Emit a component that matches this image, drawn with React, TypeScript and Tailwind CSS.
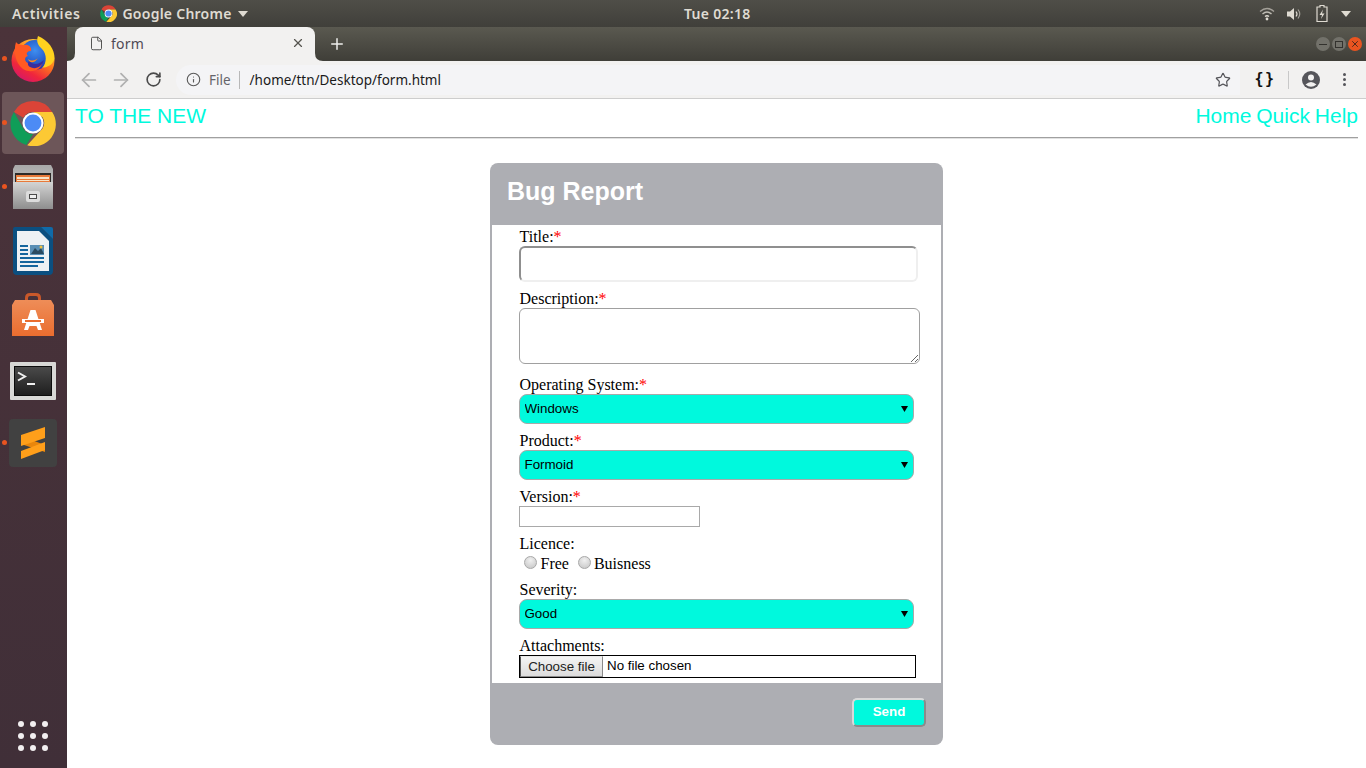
import React from "react";
import { ArrowLeft, ArrowRight, RotateCw, Info, Star, File, X, Plus } from "lucide-react";

function Firefox() {
  return (
    <svg width="46" height="46" viewBox="0 0 46 46">
      <defs>
        <linearGradient id="ffa" x1="0.75" y1="0.05" x2="0.2" y2="0.95">
          <stop offset="0" stopColor="#ffd83a" />
          <stop offset="0.4" stopColor="#ff7a1c" />
          <stop offset="0.75" stopColor="#f0263c" />
          <stop offset="1" stopColor="#d5176a" />
        </linearGradient>
        <radialGradient id="ffb" cx="0.5" cy="0.35" r="0.65">
          <stop offset="0" stopColor="#3f8ff0" />
          <stop offset="0.7" stopColor="#2458c8" />
          <stop offset="1" stopColor="#3a2e9c" />
        </radialGradient>
      </defs>
      <circle cx="23" cy="24.5" r="21.5" fill="url(#ffa)" />
      <circle cx="25" cy="19" r="15" fill="url(#ffb)" />
      <path d="M28 0 C26 6 28 9 32 13 C37 18 37 27 32 32 C37 31 42 30 44.5 23 C45 13 38 4 28 0Z" fill="#ffd21f" />
      <path d="M6 6 C8 9 12 9 14 9 C18 8 22 11 21 15 C18 15 15 17 18 20 C14 21 14 25 19 28 C24 31 29 29 32 27 C31 34 21 38 13 33 C6 28 3 16 6 6Z" fill="#ff5a22" />
      <path d="M19 25 C24 30 30 28 34 24 C32 31 25 34 20 31 C18 30 17 27 19 25Z" fill="#3a2e9c" />
      <path d="M18 23 C22 26 26 24 28 22 C25 27 20 28 18 23Z" fill="#ff8a1c" />
    </svg>
  );
}

function Chrome({ size }: { size: number }) {
  return (
    <svg width={size} height={size} viewBox="0 0 48 48">
      <path d="M24 1 A23 23 0 0 1 44 12.5 L24 12.5 A11.5 11.5 0 0 0 13.9 18.5 L4.1 12.5 A23 23 0 0 1 24 1Z" fill="#db4437" />
      <path d="M4.1 12.5 L14 29.7 A11.5 11.5 0 0 0 24 35.5 L17 47 A23 23 0 0 1 4.1 12.5Z" fill="#0f9d58" />
      <path d="M44 12.5 A23 23 0 0 1 18 47.2 L34 29.7 A11.5 11.5 0 0 0 34 18 L24 12.5Z" fill="#fcc934" />
      <circle cx="24" cy="24" r="11" fill="#fff" />
      <circle cx="24" cy="24" r="8.8" fill="#4c8bf5" />
    </svg>
  );
}

function Cabinet() {
  return (
    <svg width="42" height="44" viewBox="0 0 42 44">
      <defs>
        <linearGradient id="cab" x1="0" y1="0" x2="0" y2="1">
          <stop offset="0" stopColor="#d4d4d4" />
          <stop offset="1" stopColor="#8e8e8e" />
        </linearGradient>
        <linearGradient id="lid" x1="0" y1="0" x2="0" y2="1">
          <stop offset="0" stopColor="#a8a8a8" />
          <stop offset="1" stopColor="#e4e4e4" />
        </linearGradient>
      </defs>
      <path d="M3 0 H39 L41 4 V44 H1 V4Z" fill="url(#lid)" />
      <rect x="3" y="8" width="36" height="10" fill="#2e2a28" />
      <rect x="4" y="10" width="34" height="7" fill="#e8793a" />
      <rect x="5" y="12" width="32" height="2" fill="#f6e3c8" />
      <rect x="5" y="15" width="32" height="1" fill="#f6e3c8" />
      <rect x="1" y="17" width="40" height="27" fill="url(#cab)" />
      <rect x="14" y="26" width="14" height="11" rx="2" fill="#dcdcdc" />
      <rect x="17" y="29" width="8" height="5" fill="#4a4a4a" />
      <rect x="18" y="30" width="6" height="3" fill="#eee" />
    </svg>
  );
}

function Writer() {
  return (
    <svg width="42" height="50" viewBox="0 0 42 50">
      <path d="M3 1 H29 L41 13 V45 Q41 49 37 49 H5 Q1 49 1 45 V3 Q1 1 3 1Z" fill="#0b4f80" />
      <path d="M29 1 H39 Q41 1 41 3 V13Z" fill="#0f6aa8" />
      <path d="M5 5 H27 L37 15 V45 H5Z" fill="#eef1f4" />
      <rect x="8" y="19" width="8" height="2" fill="#15659d" />
      <rect x="8" y="23" width="8" height="2" fill="#15659d" />
      <rect x="8" y="27" width="8" height="2" fill="#15659d" />
      <rect x="18" y="19" width="14" height="10" fill="#5a8fb5" />
      <path d="M19 28 L23 22 L26 25 L29 22 L32 28Z" fill="#2a4a60" />
      <circle cx="29" cy="21" r="1.5" fill="#f0c040" />
      <rect x="8" y="31" width="24" height="2" fill="#15659d" />
      <rect x="8" y="35" width="24" height="2" fill="#15659d" />
      <rect x="8" y="39" width="18" height="2" fill="#15659d" />
    </svg>
  );
}

function Bag() {
  return (
    <svg width="44" height="44" viewBox="0 0 44 44">
      <defs>
        <linearGradient id="bag" x1="0" y1="0" x2="0" y2="1">
          <stop offset="0" stopColor="#ee8d58" />
          <stop offset="1" stopColor="#ea6d2f" />
        </linearGradient>
      </defs>
      <path d="M15.5 14 V5 Q15.5 1.5 19 1.5 H25 Q28.5 1.5 28.5 5 V14" fill="none" stroke="#c9582a" strokeWidth="3" />
      <path d="M4 7 H40 L43 12 V43 H1 V12Z" fill="url(#bag)" />
      <path d="M19.5 17 H24.5 L31 37 H27 L25.5 33 H18.5 L17 37 H13Z" fill="#fff" />
      <rect x="11" y="26" width="22" height="4" fill="#fff" />
      <rect x="14" y="27" width="16" height="2" fill="#ea6d2f" />
    </svg>
  );
}

function Terminal() {
  return (
    <svg width="46" height="38" viewBox="0 0 46 38">
      <defs>
        <linearGradient id="term" x1="0" y1="0" x2="0" y2="1">
          <stop offset="0" stopColor="#4a4a4a" />
          <stop offset="1" stopColor="#1e1e1e" />
        </linearGradient>
      </defs>
      <rect width="46" height="38" rx="1" fill="#d8d8d6" />
      <rect x="4" y="4" width="38" height="30" fill="#0c0c0c" />
      <rect x="5" y="5" width="36" height="28" fill="url(#term)" />
      <path d="M8 10.5 L15 14.5 L8 18.5" fill="none" stroke="#f0f0f0" strokeWidth="2" />
      <rect x="17" y="21" width="8" height="2" fill="#f0f0f0" />
    </svg>
  );
}

function Sublime() {
  return (
    <svg width="48" height="48" viewBox="0 0 48 48">
      <rect width="48" height="48" rx="4" fill="#414141" />
      <path d="M12 17 L36 26 V33 L12 25Z" fill="#e8860c" />
      <path d="M36 8 V19 L12 27 V16Z" fill="#ff9f1a" />
      <path d="M36 23 V31 L12 40 V32Z" fill="#ff9f1a" />
    </svg>
  );
}

function DockItem({ dot, active, children }: { dot?: boolean; active?: boolean; children: React.ReactNode }) {
  return (
    <div className="relative flex h-[64px] items-center justify-center pr-[1px]">
      {active && <div className="absolute bottom-[1px] left-[2px] right-[3px] top-[1px] rounded-[4px] bg-[#6d5659]" />}
      {dot && <div className="absolute left-[2px] top-[29px] h-[5px] w-[5px] rounded-full bg-[#e95420]" />}
      <div className="relative flex">{children}</div>
    </div>
  );
}

function Label({ text, req }: { text: string; req?: boolean }) {
  return (
    <div className="h-[18px] pl-[0.5px] text-[16px] leading-[18px] text-black">
      {text}
      {req && <span className="text-[#ff0000]">*</span>}
    </div>
  );
}

function Sel({ value }: { value: string }) {
  return (
    <div className="relative h-[30px] w-[395px]">
      <select
        defaultValue={value}
        className="block h-[30px] w-full appearance-none rounded-[8px] border border-[#a9a9a9] bg-[#00f9dd] pl-[4.5px] font-['Liberation_Sans'] text-[13.33px] text-black"
      >
        <option>{value}</option>
      </select>
      <svg className="pointer-events-none absolute right-[6px] top-[12px]" width="7" height="6" viewBox="0 0 7 6">
        <path d="M0 0 H7 L3.5 6Z" fill="#000" />
      </svg>
    </div>
  );
}

function Radio() {
  return (
    <span className="inline-block h-[13px] w-[13px] rounded-full border border-[#a8a8a8] bg-[radial-gradient(circle_at_50%_30%,#f0f0f0,#c4c4c4)]" />
  );
}

export default function App() {
  return (
    <div className="flex h-[768px] w-[1366px] flex-col overflow-hidden bg-white font-['Liberation_Sans',sans-serif]">
      <header className="relative flex h-[27px] shrink-0 items-center justify-between bg-[linear-gradient(#4f4e48,#403f3a)] pl-[12px] pr-[15px] font-['Noto_Sans',sans-serif] text-[14px] text-[#dfdbd2]">
        <div className="flex items-center">
          <span className="font-semibold tracking-[0.6px]">Activities</span>
          <span className="ml-[20px] mr-[5px] flex"><Chrome size={17} /></span>
          <span className="font-semibold tracking-[0.25px]">Google Chrome</span>
          <svg className="ml-[6px]" width="10" height="6" viewBox="0 0 10 6"><path d="M0 0 H10 L5 6Z" fill="#dfdbd2" /></svg>
        </div>
        <span className="absolute left-[684px] top-[3px] font-semibold tracking-[0.3px]">Tue 02:18</span>
        <div className="flex items-center gap-[11px]">
          <svg width="16" height="14" viewBox="0 0 16 14" fill="none" stroke="#dfdbd2" strokeWidth="1.4">
            <path d="M1 4.5 Q8 -1.5 15 4.5" opacity="0.6" />
            <path d="M3.5 7 Q8 3 12.5 7" opacity="0.8" />
            <path d="M6 9.5 Q8 8 10 9.5" />
            <circle cx="8" cy="12" r="1.4" fill="#dfdbd2" stroke="none" />
          </svg>
          <svg width="16" height="14" viewBox="0 0 16 14" fill="none" stroke="#dfdbd2" strokeWidth="1.2">
            <path d="M1 4.5 H4 L8 1 V13 L4 9.5 H1Z" fill="#dfdbd2" stroke="none" />
            <path d="M10 4.5 Q12 7 10 9.5" />
            <path d="M12 2.5 Q15.5 7 12 11.5" opacity="0.6" />
          </svg>
          <svg className="ml-[3px]" width="12" height="17" viewBox="0 0 12 17">
            <path d="M4 0.5 H8 V2 H11 V16.5 H1 V2 H4Z" fill="none" stroke="#dfdbd2" strokeWidth="1.2" />
            <path d="M7 4.5 L3.5 10 H6 L5 14 L8.5 8.5 H6Z" fill="#dfdbd2" />
          </svg>
          <svg className="ml-[2px]" width="10" height="6" viewBox="0 0 10 6"><path d="M0 0 H10 L5 6Z" fill="#dfdbd2" /></svg>
        </div>
      </header>

      <div className="flex min-h-0 flex-1">
        <aside className="flex w-[67px] shrink-0 flex-col justify-between bg-[linear-gradient(#4b333a,#402f38)]">
          <div>
            <DockItem dot><Firefox /></DockItem>
            <DockItem dot active><Chrome size={46} /></DockItem>
            <DockItem dot><Cabinet /></DockItem>
            <DockItem><Writer /></DockItem>
            <DockItem><Bag /></DockItem>
            <div className="pt-[2px]"><DockItem><Terminal /></DockItem></div>
            <div className="-mt-[2px]"><DockItem dot><Sublime /></DockItem></div>
          </div>
          <div className="mb-[17px] mr-[1px] grid w-[30px] grid-cols-3 gap-[6px] self-center">
            {Array.from({ length: 9 }).map((_, i) => (
              <span key={i} className="h-[6px] w-[6px] rounded-full bg-[#f2eff0]" />
            ))}
          </div>
        </aside>

        <div className="flex min-w-0 flex-1 flex-col">
          <div className="flex h-[34px] shrink-0 items-end bg-[linear-gradient(#5a5950,#3f3e38)] pl-[8px] pr-[4px]">
            <div className="relative flex h-[34px] w-[240px] items-center rounded-t-[8px] bg-[#f2f1f0] pb-[2px] pl-[14px] pr-[10px] font-['Noto_Sans',sans-serif] text-[14px] text-[#4e4a55]">
              <svg className="absolute -left-[8px] bottom-0" width="8" height="8" viewBox="0 0 8 8"><path d="M0 8 Q8 8 8 0 V8Z" fill="#f2f1f0" /></svg>
              <svg className="absolute -right-[8px] bottom-0" width="8" height="8" viewBox="0 0 8 8"><path d="M8 8 Q0 8 0 0 V8Z" fill="#f2f1f0" /></svg>
              <File size={15} strokeWidth={1.5} className="text-[#4a4a4a]" />
              <span className="ml-[7px] flex-1 tracking-[0.2px]">form</span>
              <X size={14} strokeWidth={2} className="text-[#55544f]" />
            </div>
            <Plus size={18} strokeWidth={2} className="mb-[8px] ml-[13px] text-[#eeeeec]" />
            <div className="mb-[10px] ml-auto flex gap-[2px]">
              <span className="flex h-[14px] w-[14px] items-center justify-center rounded-full bg-[#72716a]"><span className="h-[1px] w-[8px] bg-[#33322e]" /></span>
              <span className="flex h-[14px] w-[14px] items-center justify-center rounded-full bg-[#72716a]"><span className="h-[7px] w-[8px] border border-[#33322e]" /></span>
              <span className="flex h-[14px] w-[14px] items-center justify-center rounded-full bg-[#e95420]"><X size={10} strokeWidth={2} className="text-[#33221a]" /></span>
            </div>
          </div>

          <div className="flex h-[38px] shrink-0 items-center border-b border-[#cdcdcd] bg-[#f2f1f0] font-['Noto_Sans',sans-serif] text-[13.5px]">
            <ArrowLeft size={22} strokeWidth={1.9} className="ml-[11px] text-[#b0b0b0]" />
            <ArrowRight size={22} strokeWidth={1.9} className="ml-[10px] text-[#b0b0b0]" />
            <RotateCw size={17} strokeWidth={2.3} className="ml-[13px] text-[#4a4a4a]" />
            <div className="ml-[14px] flex h-[30px] w-[1064px] items-center rounded-l-[15px] bg-[#f4f4f6] pl-[10px]">
              <Info size={15} strokeWidth={1.8} className="text-[#5a5a5a]" />
              <span className="ml-[8px] pt-[1px] text-[#65646a]">File</span>
              <span className="ml-[8px] mr-[10px] h-[18px] w-[1px] bg-[#b8b8b8]" />
              <span className="pt-[1px] text-[#1a1a1a]">/home/ttn/Desktop/form.html</span>
              <Star size={16} strokeWidth={1.8} className="ml-auto mr-[9px] text-[#55555a]" />
            </div>
            <span className="ml-[13px] w-[24px] text-center font-['DejaVu_Sans_Mono',monospace] text-[15px] font-bold tracking-[1.5px] text-[#111]">{"{}"}</span>
            <span className="ml-[11px] h-[18px] w-[1px] bg-[#c8c8c8]" />
            <svg className="ml-[13px]" width="18" height="18" viewBox="0 0 18 18">
              <circle cx="9" cy="9" r="9" fill="#55555a" />
              <circle cx="9" cy="6.5" r="3" fill="#f2f1f0" />
              <path d="M3.5 13.5 Q9 8.5 14.5 13.5 Q9 18 3.5 13.5Z" fill="#f2f1f0" />
            </svg>
            <span className="ml-[23px] flex flex-col gap-[2px]">
              <span className="h-[3px] w-[3px] rounded-full bg-[#55555a]" />
              <span className="h-[3px] w-[3px] rounded-full bg-[#55555a]" />
              <span className="h-[3px] w-[3px] rounded-full bg-[#55555a]" />
            </span>
          </div>

          <main className="min-h-0 flex-1 bg-white pl-[8px] pr-[8px]">
            <div className="flex h-[38px] items-center justify-between pb-[4px] text-[21px] text-[#00f9dd]">
              <span>TO THE NEW</span>
              <span className="[word-spacing:-1px]">Home Quick Help</span>
            </div>
            <div className="h-[2px] border-b border-t border-b-[#e2e2e2] border-t-[#a0a0a0]" />
            <div className="ml-[415px] mt-[24px] h-[582px] w-[453px] overflow-hidden rounded-[8px] bg-[#adaeb3]">
              <div className="flex h-[62px] items-center pb-[4px] pl-[17px] text-[25px] font-bold text-white">Bug Report</div>
              <div className="mx-[2px] h-[458px] bg-white pl-[27px] pt-[3px] font-['Liberation_Serif',serif]">
                <Label text="Title:" req />
                <input className="block h-[36px] w-[399px] rounded-[6px] border-2 border-b-[#efefef] border-l-[#8f8f8f] border-r-[#efefef] border-t-[#8f8f8f] bg-white" />
                <div className="mt-[8px]"><Label text="Description:" req /></div>
                <textarea className="block h-[56px] w-[401px] rounded-[6px] border border-[#a0a0a0] bg-white" />
                <div className="mt-[12px]"><Label text="Operating System:" req /></div>
                <Sel value="Windows" />
                <div className="mt-[8px]"><Label text="Product:" req /></div>
                <Sel value="Formoid" />
                <div className="mt-[8px]"><Label text="Version:" req /></div>
                <input className="block h-[21px] w-[181px] border border-[#a9a9a9] bg-white" />
                <div className="mt-[8px]"><Label text="Licence:" /></div>
                <div className="mt-[2px] flex h-[18px] items-center pl-[5px] text-[16px] leading-[18px] text-black">
                  <span className="mb-[3px] flex"><Radio /></span>
                  <span className="ml-[3.5px]">Free</span>
                  <span className="mb-[3px] ml-[9.5px] flex"><Radio /></span>
                  <span className="ml-[2.5px]">Buisness</span>
                </div>
                <div className="mt-[8px]"><Label text="Severity:" /></div>
                <Sel value="Good" />
                <div className="mt-[8px]"><Label text="Attachments:" /></div>
                <div className="flex h-[23px] w-[397px] border border-black font-['Liberation_Sans'] text-[13.33px] leading-[19px] text-black">
                  <button className="h-[21px] w-[83px] border border-b-[#8a8a8a] border-l-[#555] border-r-[#8a8a8a] border-t-[#e8e8e8] bg-[linear-gradient(#f4f4f4,#dcdcdc)] pb-[5px] text-center text-[#222]">Choose file</button>
                  <span className="ml-[4px]">No file chosen</span>
                </div>
              </div>
              <div className="flex h-[62px] items-start justify-end pr-[17px] pt-[15px]">
                <button className="h-[29px] w-[74px] rounded-[5px] border-2 border-b-[#8a8a8a] border-l-[#d9d9d9] border-r-[#8a8a8a] border-t-[#d9d9d9] bg-[#00f9dd] pb-[2px] text-center text-[13.33px] font-bold text-white">Send</button>
              </div>
            </div>
          </main>
        </div>
      </div>
    </div>
  );
}
